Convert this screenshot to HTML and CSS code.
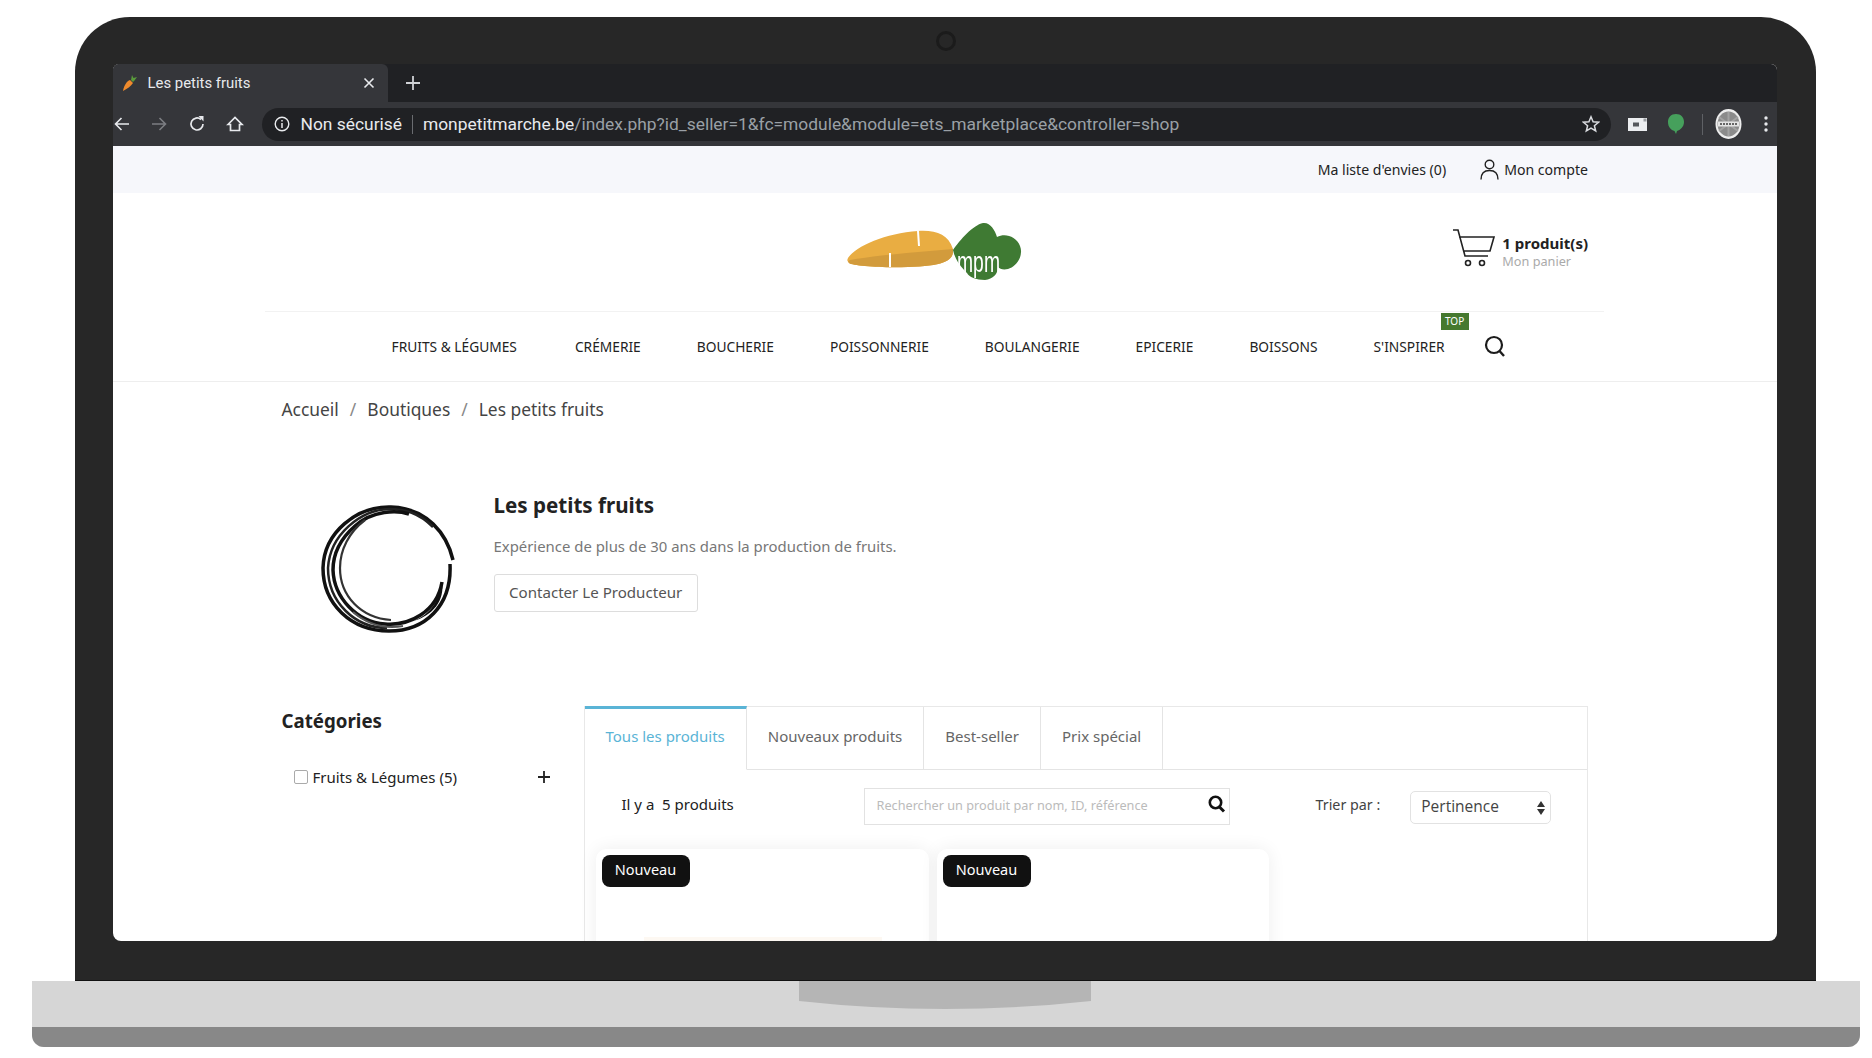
FILE: index.html
```html
<!DOCTYPE html>
<html lang="fr">
<head>
    <meta charset="UTF-8">
    <title>Les petits fruits</title>
    <link rel="stylesheet" href="styles.css">
</head>
<body>
    <div class="laptop">
        <div class="lid">
            <div class="camera"></div>
            <div class="screen">
                <!-- Browser chrome -->
                <div class="tabstrip">
                    <div class="tab">
                        <svg class="favicon" width="16" height="18" viewBox="0 0 16 18">
                            <path d="M1 17 C2 11 5 7 8 6 L11 9 C9 12 5 15 1 17Z" fill="#ef8a2c"/>
                            <path d="M9 6 L10 1 L11.500 4 L15 3 L12.500 6.500 L11 8Z" fill="#5a9a3c"/>
                        </svg>
                        <span class="tab-title">Les petits fruits</span>
                        <svg class="tab-close" width="12" height="12" viewBox="0 0 12 12"><path d="M1.500 1.500 L10.500 10.500 M10.500 1.500 L1.500 10.500" stroke="#e8eaed" stroke-width="1.600"/></svg>
                    </div>
                    <svg class="tab-new" width="16" height="16" viewBox="0 0 16 16"><path d="M8 1 V15 M1 8 H15" stroke="#d0d2d6" stroke-width="1.800"/></svg>
                </div>
                <div class="toolbar">
                    <svg class="tool" width="18" height="18" viewBox="0 0 18 18"><path d="M16 9 H2.500 M8.500 3 L2.500 9 L8.500 15" fill="none" stroke="#e8eaed" stroke-width="1.600"/></svg>
                    <svg class="tool" width="18" height="18" viewBox="0 0 18 18"><path d="M2 9 H15.500 M9.500 3 L15.500 9 L9.500 15" fill="none" stroke="#7c7e82" stroke-width="1.600"/></svg>
                    <svg class="tool" width="18" height="18" viewBox="0 0 18 18"><path d="M15 9 A6 6 0 1 1 13 4.500" fill="none" stroke="#e8eaed" stroke-width="1.700"/><path d="M10.500 1 H15.500 V6.500Z" fill="#e8eaed"/></svg>
                    <svg class="tool" width="18" height="18" viewBox="0 0 18 18"><path d="M2 9.500 L9 2.500 L16 9.500 H13.500 V15.500 H4.500 V9.500Z" fill="none" stroke="#e8eaed" stroke-width="1.700"/></svg>
                    <div class="omnibox">
                        <svg class="info" width="16" height="16" viewBox="0 0 16 16"><circle cx="8" cy="8" r="6.800" fill="none" stroke="#e8eaed" stroke-width="1.400"/><path d="M8 7 V12 M8 4 V5.600" stroke="#e8eaed" stroke-width="1.500"/></svg>
                        <span class="secure">Non sécurisé</span>
                        <span class="omni-sep"></span>
                        <span class="url">monpetitmarche.be<span class="url-path">/index.php?id_seller=1&amp;fc=module&amp;module=ets_marketplace&amp;controller=shop</span></span>
                        <svg class="star" width="18" height="18" viewBox="0 0 18 18"><path d="M9 1.800 L11.100 6.800 L16.500 7.200 L12.400 10.700 L13.700 16 L9 13.200 L4.300 16 L5.600 10.700 L1.500 7.200 L6.900 6.800Z" fill="none" stroke="#d8dade" stroke-width="1.500"/></svg>
                    </div>
                    <svg class="ext-mail" width="19" height="13" viewBox="0 0 19 13"><rect width="19" height="13" fill="#eceef0"/><rect x="5" y="4.500" width="6" height="4" fill="#55585c"/><rect x="15.500" y="0.500" width="3" height="3" fill="#9a9da1"/></svg>
                    <svg class="ext-drop" width="18" height="22" viewBox="0 0 18 22"><path d="M9 1 C14 1 17 4.500 17 9 C17 14 13 17 10 18 L9 21 L7.500 18 C4 17 1 14 1 9 C1 4.500 4 1 9 1Z" fill="#46a05c"/></svg>
                    <span class="tool-sep"></span>
                    <svg class="avatar" width="27" height="30" viewBox="0 0 27 30">
                        <ellipse cx="13.500" cy="15" rx="13" ry="15" fill="#eeeeee"/>
                        <ellipse cx="13.500" cy="15" rx="11" ry="12.500" fill="#8b8b8b"/>
                        <path d="M13.500 3 V27 M4 8 L23 22 M23 8 L4 22" stroke="#a3a3a3" stroke-width="2"/>
                        <rect x="3" y="12.500" width="21" height="5" fill="#e4e4e4"/>
                        <path d="M5 15 H22" stroke="#666" stroke-width="2" stroke-dasharray="2 1"/>
                    </svg>
                    <svg class="dots" width="4" height="16" viewBox="0 0 4 16"><circle cx="2" cy="2" r="1.700" fill="#e8eaed"/><circle cx="2" cy="8" r="1.700" fill="#e8eaed"/><circle cx="2" cy="14" r="1.700" fill="#e8eaed"/></svg>
                </div>

                <!-- Shop page -->
                <div class="topbar">
                    <a class="top-link">Ma liste d'envies (0)</a>
                    <a class="top-link account">
                        <svg width="19" height="21" viewBox="0 0 19 21"><circle cx="9.500" cy="5.500" r="4.300" fill="none" stroke="#222" stroke-width="1.400"/><path d="M1 20.500 C1 14 5 11.500 9.500 11.500 C14 11.500 18 14 18 20.500" fill="none" stroke="#222" stroke-width="1.400"/></svg>
                        Mon compte
                    </a>
                </div>

                <div class="brand-row">
                    <svg class="logo" width="174" height="58" viewBox="0 0 174 58">
                        <path d="M0 36 C8 24 38 11 70 9 C88 8 100 12 105 27 C106 38 98 44 60 45 C35 46 5 44 1 41 C-1 39 -1 38 0 36Z" fill="#e9ad42"/>
                        <path d="M2 38 C30 33 70 30 105 27 C106 38 98 44 60 45 C35 46 5 44 1 41 C0 40 0 39 2 38Z" fill="#d29b3c"/>
                        <path d="M70 9 L71 24 M42 31 L42 45" stroke="#fff" stroke-width="2"/>
                        <path d="M105 28 C112 18 125 3 135 1 C142 0 147 8 149 15 C157 11 168 14 172 24 C176 34 168 45 160 47 C155 48 152 47 150 45 C150 52 145 57 137 58 C128 58 121 55 119 51 C114 46 107 38 105 28Z" fill="#3f7a33"/>
                        <text class="logo-text" x="109" y="50" textLength="43" lengthAdjust="spacingAndGlyphs">mpm</text>
                    </svg>
                    <div class="cart">
                        <svg width="43" height="38" viewBox="0 0 43 38">
                            <path d="M1 1 H6 L13 27 H36 M7 8 H42 L38 22 H11" fill="none" stroke="#222" stroke-width="1.600"/>
                            <circle cx="16" cy="34" r="2.500" fill="none" stroke="#222" stroke-width="1.600"/>
                            <circle cx="30" cy="34" r="2.500" fill="none" stroke="#222" stroke-width="1.600"/>
                        </svg>
                        <div class="cart-text">
                            <div class="cart-count">1 produit(s)</div>
                            <div class="cart-label">Mon panier</div>
                        </div>
                    </div>
                </div>

                <nav class="nav">
                    <a class="nav-item">FRUITS &amp; LÉGUMES</a>
                    <a class="nav-item">CRÉMERIE</a>
                    <a class="nav-item">BOUCHERIE</a>
                    <a class="nav-item">POISSONNERIE</a>
                    <a class="nav-item">BOULANGERIE</a>
                    <a class="nav-item">EPICERIE</a>
                    <a class="nav-item">BOISSONS</a>
                    <a class="nav-item nav-top">S'INSPIRER<span class="top-badge">TOP</span></a>
                    <svg class="nav-search" width="22" height="23" viewBox="0 0 22 23"><circle cx="10" cy="10" r="8" fill="none" stroke="#1c1c1c" stroke-width="2.200"/><path d="M15.500 16 L20 21" stroke="#1c1c1c" stroke-width="2.400"/></svg>
                </nav>

                <div class="page">
                    <div class="breadcrumb">
                        <span>Accueil</span><span class="crumb-sep">/</span><span>Boutiques</span><span class="crumb-sep">/</span><span>Les petits fruits</span>
                    </div>

                    <div class="shop">
                        <svg class="shop-logo" width="150" height="150" viewBox="0 0 150 150">
                            <path d="M140 66 C134 40 114 14 78 13 C44 12 11 38 10 74 C10 110 38 137 76 137 C112 137 139 112 137 70" fill="none" stroke="#111" stroke-width="3.500"/>
                            <path d="M120 33 C106 19 92 15 76 15 C48 16 17 40 15 74 C15 108 42 134 74 134" fill="none" stroke="#222" stroke-width="2.500"/>
                            <path d="M96 20 C84 16 60 16 42 32 C26 46 20 60 20 76 C21 104 44 128 72 130 C96 132 124 118 129 88" fill="none" stroke="#111" stroke-width="3.500"/>
                            <path d="M52 26 C36 38 27 56 27 74 C27 102 48 124 78 126" fill="none" stroke="#333" stroke-width="2.200"/>
                            <path d="M40 118 C54 130 72 135 90 132" fill="none" stroke="#555" stroke-width="2"/>
                            <path d="M100 127 C114 122 126 110 129 88 C132 106 120 122 100 127Z" fill="#111"/>
                        </svg>
                        <div class="shop-info">
                            <h2 class="shop-title">Les petits fruits</h2>
                            <p class="shop-desc">Expérience de plus de 30 ans dans la production de fruits.</p>
                            <a class="contact-btn">Contacter Le Producteur</a>
                        </div>
                    </div>

                    <div class="content">
                        <aside class="sidebar">
                            <h3 class="side-title">Catégories</h3>
                            <div class="cat-row">
                                <span class="checkbox"></span>
                                <span class="cat-name">Fruits &amp; Légumes (5)</span>
                                <svg class="cat-plus" width="12" height="12" viewBox="0 0 12 12"><path d="M6 0 V12 M0 6 H12" stroke="#222" stroke-width="1.800"/></svg>
                            </div>
                        </aside>

                        <section class="panel">
                            <div class="tabs">
                                <a class="shop-tab active">Tous les produits</a>
                                <a class="shop-tab">Nouveaux produits</a>
                                <a class="shop-tab">Best-seller</a>
                                <a class="shop-tab">Prix spécial</a>
                            </div>
                            <div class="filters">
                                <span class="count">Il y a&nbsp; 5 produits</span>
                                <div class="search-box">
                                    <input class="search-input" type="text" placeholder="Rechercher un produit par nom, ID, référence">
                                    <svg width="18" height="18" viewBox="0 0 18 18"><circle cx="7.500" cy="7.500" r="5.700" fill="none" stroke="#111" stroke-width="2.600"/><path d="M11.500 12 L16 16.500" stroke="#111" stroke-width="3"/></svg>
                                </div>
                                <span class="sort-label">Trier par :</span>
                                <div class="sort-select">
                                    <span>Pertinence</span>
                                    <svg width="8" height="14" viewBox="0 0 8 14"><path d="M4 0 L8 6 H0Z M0 8 H8 L4 14Z" fill="#333"/></svg>
                                </div>
                            </div>
                            <div class="products">
                                <div class="card">
                                    <span class="badge">Nouveau</span>
                                    <div class="card-img"></div>
                                </div>
                                <div class="card">
                                    <span class="badge">Nouveau</span>
                                </div>
                            </div>
                        </section>
                    </div>
                </div>
            </div>
        </div>
        <div class="base">
            <svg class="notch" width="292" height="28" viewBox="0 0 292 28"><path d="M0 0 H292 V20 Q146 36 0 20Z" fill="#b5b5b5"/></svg>
            <div class="base-edge"></div>
        </div>
    </div>
</body>
</html>
```

FILE: styles.css
```css
/* Page */
* {
    box-sizing: border-box;
}

body {
    margin: 0;
    background-color: white;
    font-family: "Noto Sans", sans-serif;
    color: #222;
}

.laptop {
    width: 1872px;
    height: 1058px;
    padding-top: 17px;
    overflow: hidden;
}

.lid {
    position: relative;
    width: 1741px;
    height: 964px;
    margin-left: 75px;
    padding: 47px 39px 0 37.500px;
    background-color: #272727;
    border-radius: 55px 55px 0 0;
    border-bottom: 1px solid #111;
}

.camera {
    position: absolute;
    top: 14px;
    left: 861px;
    width: 20px;
    height: 20px;
    border-radius: 50%;
    border: 3px solid #1b1b1b;
}

.screen {
    height: 877px;
    overflow: hidden;
    background-color: white;
    border-radius: 6px 6px 8px 8px;
}

.base {
    position: relative;
    width: 1828px;
    height: 66px;
    margin-left: 32px;
    padding-top: 46px;
    background-color: #d6d6d6;
    border-radius: 0 0 12px 12px;
    overflow: hidden;
}

.notch {
    position: absolute;
    top: 0;
    left: 767px;
}

.base-edge {
    height: 20px;
    background-color: #888;
}

/* Browser chrome */
.tabstrip {
    display: flex;
    align-items: center;
    height: 38px;
    background-color: #202124;
    font-family: Roboto, sans-serif;
}

.tab {
    display: flex;
    align-items: center;
    width: 275px;
    height: 38px;
    padding: 0 13px 0 9px;
    background-color: #35363a;
    border-radius: 6px 6px 0 0;
}

.favicon {
    margin-right: 10px;
}

.tab-title {
    flex: 1;
    color: #e8eaed;
    font-size: 14.900px;
}

.tab-new {
    margin-left: 17px;
}

.toolbar {
    display: flex;
    align-items: center;
    height: 44px;
    background-color: #35363a;
    font-family: Roboto, sans-serif;
}

.tool {
    margin-right: 20px;
}

.toolbar .tool:first-child {
    margin-left: 0;
    margin-right: 19px;
}

.omnibox {
    display: flex;
    align-items: center;
    width: 1349px;
    height: 33px;
    margin-left: -2px;
    padding: 0 11px 0 12px;
    background-color: #202124;
    border-radius: 17px;
    font-size: 17.400px;
}

.info {
    margin-right: 11px;
}

.secure {
    color: #e8eaed;
}

.omni-sep {
    width: 1px;
    height: 19px;
    margin: 0 10px;
    background-color: #6a6c70;
}

.url {
    flex: 1;
    color: #e8eaed;
}

.url-path {
    color: #9aa0a6;
}

.ext-mail {
    margin-left: 17px;
}

.ext-drop {
    margin-left: 20px;
}

.tool-sep {
    width: 1px;
    height: 21px;
    margin: 0 12px 0 17px;
    background-color: #5f6165;
}

.dots {
    margin-left: 22px;
}

/* Top bar and brand row */
.topbar {
    display: flex;
    justify-content: flex-end;
    align-items: center;
    gap: 34px;
    height: 47px;
    padding-right: 189px;
    background-color: #f6f7fb;
    font-size: 14.100px;
}

.top-link {
    display: flex;
    align-items: center;
    gap: 5px;
}

.brand-row {
    position: relative;
    height: 119px;
    margin: 0 173px 0 152px;
    border-bottom: 1px solid #f2f2f2;
}

.logo {
    position: absolute;
    top: 29px;
    left: 583px;
    filter: blur(0.4px);
    overflow: visible;
}

.logo-text {
    font-family: "Liberation Sans", sans-serif;
    font-size: 30px;
    fill: white;
}

.cart {
    position: absolute;
    top: 33px;
    right: 16px;
    display: flex;
    align-items: center;
    gap: 7px;
}

.cart-text {
    padding-top: 7px;
}

.cart-count {
    font-size: 15px;
    font-weight: 700;
    line-height: 20px;
}

.cart-label {
    color: #aaa;
    font-size: 12.700px;
    line-height: 17px;
}

.nav {
    display: flex;
    align-items: center;
    height: 70px;
    padding-left: 279px;
    border-bottom: 1px solid #eee;
}

.nav-item {
    margin-right: 56px;
    font-size: 13.750px;
}

.nav-item:first-child {
    margin-right: 58px;
}

.nav-top {
    position: relative;
    margin-right: 39px;
}

.top-badge {
    position: absolute;
    top: -24px;
    right: -24px;
    width: 28px;
    height: 17px;
    background-color: #46792f;
    color: white;
    font-size: 10px;
    line-height: 16px;
    text-align: center;
}

/* Shop page */
.page {
    padding: 15px 189px 0 169px;
}

.breadcrumb {
    display: flex;
    color: #444;
    font-size: 17.400px;
    line-height: 24px;
}

.crumb-sep {
    margin: 0 11px;
    color: #888;
}

.shop {
    display: flex;
    gap: 31px;
    margin-top: 68px;
    margin-left: 31px;
}

.shop-logo {
    margin-top: 5px;
    filter: blur(0.4px);
}

.shop-title {
    margin: 0;
    font-size: 20.600px;
    font-weight: 700;
    line-height: 32px;
}

.shop-desc {
    margin: 13px 0 16px;
    color: #777;
    font-size: 14.900px;
    line-height: 24px;
}

.contact-btn {
    display: inline-block;
    height: 38px;
    padding: 0 14.500px;
    border: 1px solid #ddd;
    border-radius: 3px;
    color: #555;
    font-size: 15.100px;
    line-height: 34px;
}

.content {
    display: flex;
    margin-top: 62px;
}

.sidebar {
    flex: none;
    width: 302px;
}

.side-title {
    margin: 1px 0 0;
    font-size: 18.700px;
    font-weight: 700;
    line-height: 28px;
}

.cat-row {
    display: flex;
    align-items: center;
    margin-top: 32px;
    padding: 0 34px 0 12px;
    font-size: 15px;
}

.checkbox {
    width: 14px;
    height: 14px;
    margin-right: 5px;
    border: 1px solid #aaa;
    border-radius: 2px;
}

.cat-name {
    flex: 1;
}

.panel {
    flex: 1;
    height: 400px;
    border: 1px solid #e8e8e8;
}

.tabs {
    display: flex;
    height: 63px;
    border-bottom: 1px solid #e4e4e4;
}

.shop-tab {
    margin-bottom: -1px;
    padding: 0 21px;
    border-right: 1px solid #e4e4e4;
    border-bottom: 1px solid #e4e4e4;
    color: #666;
    font-size: 15px;
    line-height: 58px;
}

.shop-tab.active {
    margin-top: -1px;
    border-top: 3px solid #5ab4d6;
    border-bottom-color: white;
    color: #5ab4d6;
    line-height: 54px;
}

.filters {
    display: flex;
    align-items: flex-start;
    height: 79px;
    padding-top: 18px;
    padding-left: 37px;
}

.count {
    width: 242px;
    padding-top: 4px;
    font-size: 15px;
    line-height: 24px;
}

.search-box {
    display: flex;
    align-items: flex-start;
    width: 366px;
    height: 37px;
    padding: 4px 3px 0 12px;
    border: 1px solid #e2e2e2;
}

.search-box svg {
    margin-top: 2px;
}

.search-input {
    flex: 1;
    min-width: 0;
    height: 24px;
    padding: 0;
    border: none;
    outline: none;
    font-family: inherit;
    font-size: 12.700px;
}

.search-input::placeholder {
    color: #bbb;
}

.sort-label {
    margin-left: 86px;
    padding-top: 5px;
    color: #444;
    font-size: 14.300px;
    line-height: 24px;
}

.sort-select {
    display: flex;
    align-items: center;
    justify-content: space-between;
    width: 141px;
    height: 33px;
    margin-top: 3px;
    margin-left: 30px;
    padding: 0 5px 3px 10px;
    border: 1px solid #e2e2e2;
    border-radius: 5px;
    color: #444;
    font-family: "Open Sans", sans-serif;
    font-size: 15.500px;
}

.sort-select svg {
    margin-top: 3px;
}

.products {
    display: flex;
    gap: 8px;
    padding-left: 11px;
}

.card {
    width: 333px;
    height: 200px;
    padding: 6px;
    background-color: white;
    border-radius: 10px;
    box-shadow: 0 0 18px rgba(0, 0, 0, 0.07);
}

.card + .card {
    width: 332px;
}

.badge {
    display: block;
    width: 88px;
    height: 32px;
    background-color: #111;
    border-radius: 8px;
    color: white;
    font-size: 14.500px;
    line-height: 29px;
    text-align: center;
}

.card-img {
    height: 20px;
    margin: 50px 41px 0 42px;
    background-color: #fdf8f2;
}
```
